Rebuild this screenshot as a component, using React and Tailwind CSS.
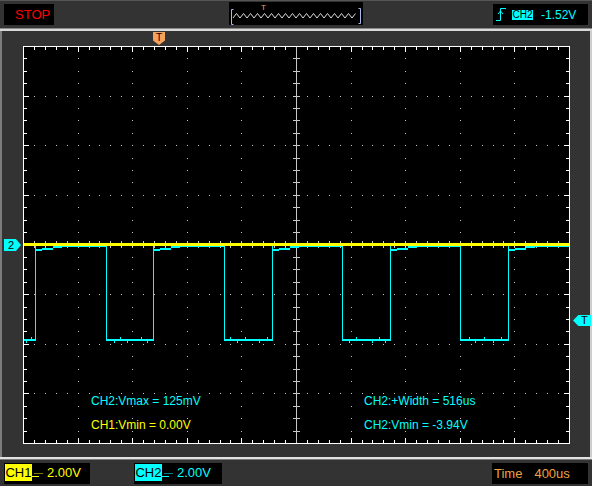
import React from 'react';

const W = 546;
const H = 397;
const DX = W / 10;
const DY = H / 8;
const CYAN = '#00ffff';
const YELLOW = '#ffff00';

const rises = [12, 130, 249, 367, 485];
const falls = [83, 201, 319, 437];
const noise = [3, 8, 91, 97, 104, 118, 124, 207, 214, 222, 236, 244, 326, 333, 349, 356, 362, 446, 452, 461, 470, 478];

function Plot() {
  const marks = [];

  // dotted grid
  for (let i = 1; i < 10; i++) {
    if (i === 5) continue;
    const x = Math.round(i * DX);
    for (let k = 1; k < 32; k++) {
      marks.push(<rect key={`v${i}-${k}`} x={x} y={Math.round((k * DY) / 4)} width="1" height="1" fill="#c4c4c4" />);
    }
  }
  for (let j = 1; j < 8; j++) {
    if (j === 4) continue;
    const y = Math.round(j * DY);
    for (let k = 1; k < 50; k++) {
      marks.push(<rect key={`h${j}-${k}`} x={Math.round((k * DX) / 5)} y={y} width="1" height="1" fill="#c4c4c4" />);
    }
  }

  // edge ticks + centre cross ticks
  for (let k = 1; k < 50; k++) {
    const x = Math.round((k * DX) / 5);
    const len = k % 5 === 0 ? 5 : 3;
    marks.push(<rect key={`tt${k}`} x={x} y="1" width="1" height={len} fill="#fff" />);
    marks.push(<rect key={`tb${k}`} x={x} y={H - len} width="1" height={len} fill="#fff" />);
    marks.push(<rect key={`tc${k}`} x={x} y="195" width="1" height="7" fill="#c8c8c8" />);
  }
  for (let k = 1; k < 32; k++) {
    const y = Math.round((k * DY) / 4);
    const len = k % 4 === 0 ? 5 : 3;
    marks.push(<rect key={`tl${k}`} x="1" y={y} width={len} height="1" fill="#fff" />);
    marks.push(<rect key={`tr${k}`} x={W - len} y={y} width={len} height="1" fill="#fff" />);
    marks.push(<rect key={`tm${k}`} x="270" y={y} width="7" height="1" fill="#c8c8c8" />);
  }

  // CH2 square wave
  const trace = [];
  let start = 1;
  rises.forEach((r, i) => {
    trace.push(<rect key={`lo${i}`} x={start} y="293" width={r - start + 1} height="2" fill={CYAN} />);
    trace.push(<rect key={`up${i}`} x={r} y="200" width="1" height="95" fill={CYAN} />);
    const f = falls[i] ?? W;
    trace.push(<rect key={`s1${i}`} x={r} y="203" width="7" height="2" fill={CYAN} />);
    trace.push(<rect key={`s2${i}`} x={r + 7} y="202" width="11" height="1.5" fill={CYAN} />);
    trace.push(<rect key={`s3${i}`} x={r + 18} y="200" width="9" height="2" fill={CYAN} />);
    trace.push(<rect key={`s4${i}`} x={r + 26} y="200" width={f - r - 26} height="1" fill={CYAN} />);
    if (falls[i] !== undefined) {
      trace.push(<rect key={`dn${i}`} x={f} y="200" width="1" height="95" fill={CYAN} />);
    }
    start = f;
  });
  noise.forEach((x, i) => {
    trace.push(<rect key={`n${i}`} x={x} y={i % 2 ? 291 : 295} width="1" height="2" fill={CYAN} />);
  });

  return (
    <svg width="547" height="398" viewBox="0 0 547 398" shapeRendering="crispEdges" className="block">
      <rect x="0.5" y="0.5" width={W} height={H} fill="#000" stroke="#fff" strokeWidth="1" />
      {marks}
      <rect x="273" y="1" width="1" height={H - 1} fill="#c8c8c8" />
      <rect x="1" y="198" width={W - 1} height="1" fill="#c8c8c8" />
      {trace}
      <rect x="1" y="197" width={W - 1} height="3" fill={YELLOW} />
    </svg>
  );
}

function Coupling({ color }) {
  return (
    <svg width="11" height="10" viewBox="0 0 11 10" className="shrink-0">
      <path d="M2.5 5.5h1M4.5 5.5h1M6.5 5.5h1M8.5 5.5h1M10.5 5.5h0.5" stroke={color} strokeWidth="1" />
      <path d="M0 8.5h7" stroke={color} strokeWidth="1" />
    </svg>
  );
}

function ChannelBox({ name, color, value }) {
  return (
    <div className="flex h-[21px] w-full items-start bg-black">
      <div
        className="ml-[1px] mt-[1px] flex h-[17px] w-[27px] items-center justify-center text-[13px] leading-none text-black"
        style={{ backgroundColor: color }}
      >
        {name}
      </div>
      <div className="mt-[5px]">
        <Coupling color={color} />
      </div>
      <span className="ml-[4px] mt-[3px] text-[13px] leading-[14px]" style={{ color }}>
        {value}
      </span>
    </div>
  );
}

export default function App() {
  return (
    <div className="h-[486px] w-[592px] overflow-hidden bg-[#333333] font-['Liberation_Sans',Arial,sans-serif]">
      {/* top bar */}
      <div className="flex h-[28px] items-start border-t border-[#555555] pl-[4px]">
        <div className="mt-[3px] flex h-[21px] w-[50px] items-center bg-black pl-[11px] text-[13px] leading-none text-[#ff0000]">
          STOP
        </div>
        <div className="ml-[175px] mt-[1px] h-[23px] w-[134px] bg-black">
          <svg width="134" height="23" viewBox="0 0 134 23">
            <path d="M4.5 7.5h-2v15h2" fill="none" stroke="#a9b9ec" />
            <path d="M129.5 6.5h2v15h-2" fill="none" stroke="#a9b9ec" />
            <polyline
              fill="none"
              stroke="#dcdcdc"
              strokeWidth="1"
              points={Array.from({ length: 36 }, (_, k) => `${4 + k * 3.5},${k % 2 ? 11.5 : 16}`).join(' ')}
            />
            <text x="32" y="8" fontSize="8" fill="#f5a25a" fontFamily="Liberation Sans, Arial, sans-serif">T</text>
          </svg>
        </div>
        <div className="ml-[130px] mt-[3px] flex h-[21px] w-[95px] items-center bg-black pl-[3px]">
          <svg width="10" height="15" viewBox="0 0 10 15" className="shrink-0">
            <path d="M0 13.5h4.5V1.5H10" fill="none" stroke={CYAN} strokeWidth="1" />
            <path d="M2 7l2.5-3 2.5 3" fill="none" stroke={CYAN} strokeWidth="1" />
          </svg>
          <span className="ml-[6px] flex h-[10px] w-[21px] items-center justify-center bg-[#00ffff] text-[10px] leading-none text-black">
            CH2
          </span>
          <span className="ml-[8px] text-[12px] leading-none text-[#00ffff]">-1.52V</span>
        </div>
      </div>

      {/* separator */}
      <div className="h-[3px] border-t border-[#8a8a8a] bg-[#d8d8d8]" />

      {/* scope panel */}
      <div className="relative h-[426px] border-l-2 border-r-2 border-l-[#7c7c7c] border-r-[#cdcdcd] pl-[21px] pt-[15px]">
        <div className="relative h-[398px] w-[547px]">
          <Plot />
          <div className="absolute left-[68px] top-[348px] grid grid-cols-[273px_auto] gap-y-[10px] text-[12px] leading-[14px]">
            <span className="text-[#00ffff]">CH2:Vmax = 125mV</span>
            <span className="text-[#00ffff]">CH2:+Width = 516us</span>
            <span className="text-[#ffff00]">CH1:Vmin = 0.00V</span>
            <span className="text-[#00ffff]">CH2:Vmin = -3.94V</span>
          </div>
        </div>

        <div className="absolute left-[2px] top-[208px] flex h-[12px] w-[17px] items-center bg-[#00ffff] pl-[4px] text-[11px] leading-none text-black [clip-path:polygon(0_0,70%_0,100%_50%,70%_100%,0_100%)]">
          2
        </div>
        <div className="absolute left-[571px] top-[284px] z-10 flex h-[11px] w-[18px] items-center bg-[#00ffff] pl-[8px] text-[11px] leading-none text-black [clip-path:polygon(30%_0,100%_0,100%_100%,30%_100%,0_50%)]">
          T
        </div>
        <div className="absolute left-[151px] top-[1px] flex h-[13px] w-[12px] justify-center bg-[#f5a25a] pt-[1px] text-[10px] leading-none text-black [clip-path:polygon(0_0,100%_0,100%_65%,50%_100%,0_65%)]">
          T
        </div>
      </div>

      {/* separator */}
      <div className="h-[3px] border-b border-[#7a7a7a] bg-[#e2e2e2]" />

      {/* bottom bar */}
      <div className="flex h-[26px] items-start pl-[4px] pt-[3px]">
        <div className="w-[86px]">
          <ChannelBox name="CH1" color={YELLOW} value="2.00V" />
        </div>
        <div className="ml-[44px] w-[88px]">
          <ChannelBox name="CH2" color={CYAN} value="2.00V" />
        </div>
        <div className="ml-auto mr-[4px] flex h-[21px] w-[96px] items-center bg-black pl-[2px] text-[13px] leading-none text-[#f0a040]">
          <span>Time</span>
          <span className="ml-[12px]">400us</span>
        </div>
      </div>
    </div>
  );
}
